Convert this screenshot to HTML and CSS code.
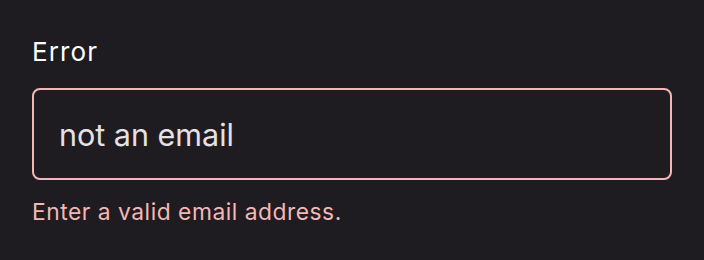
FILE: index.html
```html
<!DOCTYPE html>
<html lang="en">
<head>
    <meta charset="UTF-8">
    <title>Error field</title>
    <link rel="stylesheet" href="styles.css">
</head>
<body>
    <div class="field">
        <label class="field-label" for="email">Error</label>
        <input class="field-input" id="email" type="text" value="not an email">
        <p class="field-error">Enter a valid email address.</p>
    </div>
</body>
</html>
```

FILE: styles.css
```css
body {
    margin: 0;
    background-color: #1e1c21;
    font-family: Inter, "Noto Sans", sans-serif;
}

.field {
    display: flex;
    flex-direction: column;
    padding: 34px 32px 0 32px;
}

.field-label {
    color: #ffffff;
    font-size: 26px;
    line-height: 36px;
    letter-spacing: 1.1px;
    margin-bottom: 18px;
}

.field-input {
    box-sizing: border-box;
    height: 92px;
    width: 640px;
    padding: 0 25px;
    border: 2px solid #f2b8b5;
    border-radius: 8px;
    background: transparent;
    color: #e6e1e5;
    font-family: inherit;
    font-size: 30.5px;
    outline: none;
}

.field-error {
    margin: 16px 0 0 0;
    color: #f2b8b5;
    font-size: 22.8px;
    line-height: 32px;
    letter-spacing: 0.52px;
}
```
